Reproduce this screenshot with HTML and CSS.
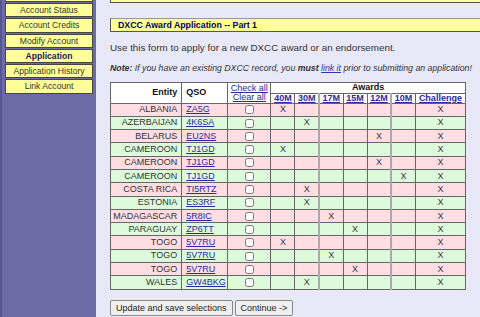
FILE: index.html
```html
<!DOCTYPE html>
<html lang="en">
<head>
    <meta charset="UTF-8">
    <meta name="viewport" content="width=device-width, initial-scale=1.0">
    <title>DXCC Award Application</title>
    <link rel="stylesheet" href="styles.css">
</head>
<body>
    <div class="page">
        <!-- Левое меню -->
        <div class="sidebar">
            <div class="menu-item cut">&nbsp;</div>
            <a href="#" class="menu-item">Account Status</a>
            <a href="#" class="menu-item">Account Credits</a>
            <a href="#" class="menu-item">Modify Account</a>
            <a href="#" class="menu-item active">Application</a>
            <a href="#" class="menu-item">Application History</a>
            <a href="#" class="menu-item">Link Account</a>
        </div>

        <div class="main">
            <div class="top-box"></div>

            <div class="heading">DXCC Award Application -- Part 1</div>

            <p class="intro">Use this form to apply for a new DXCC award or an endorsement.</p>
            <p class="note"><b>Note:</b> If you have an existing DXCC record, you <b>must</b> <a href="#">link it</a> prior to submitting an application!</p>

            <table class="awards">
                <colgroup>
                    <col class="c-entity">
                    <col class="c-qso">
                    <col class="c-check">
                    <col class="c-band"><col class="c-band"><col class="c-band">
                    <col class="c-band"><col class="c-band"><col class="c-band">
                    <col class="c-chal">
                </colgroup>
                <thead>
                    <tr>
                        <th rowspan="2" class="entity">Entity</th>
                        <th rowspan="2" class="qso">QSO</th>
                        <th rowspan="2" class="check"><a href="#">Check all</a><br><a href="#">Clear all</a></th>
                        <th colspan="7" class="awards-title">Awards</th>
                    </tr>
                    <tr class="bands">
                        <th><a href="#">40M</a></th>
                        <th><a href="#">30M</a></th>
                        <th class="soft"><a href="#">17M</a></th>
                        <th><a href="#">15M</a></th>
                        <th><a href="#">12M</a></th>
                        <th class="soft"><a href="#">10M</a></th>
                        <th><a href="#">Challenge</a></th>
                    </tr>
                </thead>
                <tbody id="rows"></tbody>
            </table>

            <div class="buttons">
                <button class="btn">Update and save selections</button>
                <button class="btn">Continue -&gt;</button>
            </div>
        </div>
    </div>

    <script>
        // Данные QSO: страна, позывной, диапазон
        var rows = [
            ["ALBANIA", "ZA5G", 0],
            ["AZERBAIJAN", "4K6SA", 1],
            ["BELARUS", "EU2NS", 4],
            ["CAMEROON", "TJ1GD", 0],
            ["CAMEROON", "TJ1GD", 4],
            ["CAMEROON", "TJ1GD", 5],
            ["COSTA RICA", "TI5RTZ", 1],
            ["ESTONIA", "ES3RF", 1],
            ["MADAGASCAR", "5R8IC", 2],
            ["PARAGUAY", "ZP6TT", 3],
            ["TOGO", "5V7RU", 0],
            ["TOGO", "5V7RU", 2],
            ["TOGO", "5V7RU", 3],
            ["WALES", "GW4BKG", 1]
        ];

        var tbody = document.getElementById("rows");
        rows.forEach(function(r, i) {
            var tr = document.createElement("tr");
            tr.className = i % 2 === 0 ? "pink" : "green";
            var html = '<td class="entity">' + r[0] + '</td>' +
                '<td class="qso"><a href="#">' + r[1] + '</a></td>' +
                '<td class="check"><input type="checkbox"></td>';
            for (var b = 0; b < 6; b++) {
                var cls = (b === 2 || b === 5) ? ' class="soft"' : '';
                html += '<td' + cls + '>' + (b === r[2] ? 'X' : '') + '</td>';
            }
            html += '<td>X</td>';
            tr.innerHTML = html;
            tbody.appendChild(tr);
        });
    </script>
</body>
</html>
```

FILE: styles.css
```css
body {
    margin: 0;
    font-family: "Liberation Sans", Arial, sans-serif;
    font-size: 9px;
    color: #333;
    background: #e8e8f8;
}

.page {
    display: flex;
    min-height: 317px;
}

/* Боковое меню */
.sidebar {
    width: 94px;
    flex-shrink: 0;
    background: #6b6ba8;
    border-left: 2px solid #55558f;
    display: flex;
    flex-direction: column;
    gap: 1px;
}

.menu-item {
    display: block;
    margin: 0 3px;
    height: 12.3px;
    line-height: 12.3px;
    background: #ffff99;
    border: 1px solid #444;
    color: #333;
    text-align: center;
    text-decoration: none;
    font-size: 8.6px;
    white-space: nowrap;
}

.menu-item.cut {
    height: 1px;
    border-top: none;
}

.menu-item.active {
    font-weight: bold;
    color: #1a1a50;
}

/* Основная часть */
.main {
    flex: 1;
    padding-left: 14px;
    overflow: hidden;
}

.top-box {
    height: 2px;
    background: #ffff99;
    border: 1px solid #555;
    border-top: none;
    border-right: none;
}

.heading {
    margin-top: 15px;
    height: 12px;
    line-height: 12px;
    padding-left: 7px;
    background: #ffff99;
    border: 1px solid #999;
    border-left-color: #555;
    border-bottom-color: #555;
    border-right: none;
    color: #000066;
    font-weight: bold;
    font-size: 8.8px;
}

.intro {
    margin: 10px 0 0;
    line-height: 12px;
    font-size: 9.8px;
    white-space: nowrap;
}

.note {
    margin: 8px 0 0;
    line-height: 12px;
    font-style: italic;
    font-size: 8.75px;
    white-space: nowrap;
}

.note a {
    color: #3333aa;
}

/* Таблица наград */
.awards {
    margin-top: 8px;
    width: 356px;
    border-collapse: collapse;
    table-layout: fixed;
    background: #fff;
}

.c-entity { width: 71px; }
.c-qso { width: 46px; }
.c-check { width: 43px; }
.c-band { width: 24px; }
.c-chal { width: 50px; }

.awards th,
.awards td {
    border: 1px solid #666;
    padding: 0 2px;
    height: 12.3px;
    line-height: 11px;
    text-align: center;
    white-space: nowrap;
    overflow: hidden;
}

.awards th {
    font-weight: bold;
    color: #111;
    background: #fff;
}

.awards .entity {
    text-align: right;
    padding-right: 4px;
}

.awards .qso {
    text-align: left;
    padding-left: 4px;
}

.awards th.check {
    font-weight: normal;
    line-height: 9px;
    padding: 0;
}

.awards th.awards-title {
    height: 9.5px;
    line-height: 9.5px;
}

.awards .bands th {
    height: 9px;
    line-height: 9px;
}

.awards a {
    color: #2a2aa0;
}

.awards .soft {
    border-left: 2px solid #aaa;
}

.awards tr.pink td { background: #ffdde3; }
.awards tr.green td { background: #ddfadc; }

.awards td.check input {
    width: 9px;
    height: 9px;
    margin: 0;
    vertical-align: middle;
}

/* Кнопки */
.buttons {
    margin-top: 10px;
    display: flex;
    gap: 2px;
}

.btn {
    font-family: "Liberation Sans", Arial, sans-serif;
    font-size: 9px;
    color: #222;
    background: #efefef;
    border: 1px solid #888;
    border-radius: 2px;
    padding: 1px 5px;
    height: 16px;
}
```
